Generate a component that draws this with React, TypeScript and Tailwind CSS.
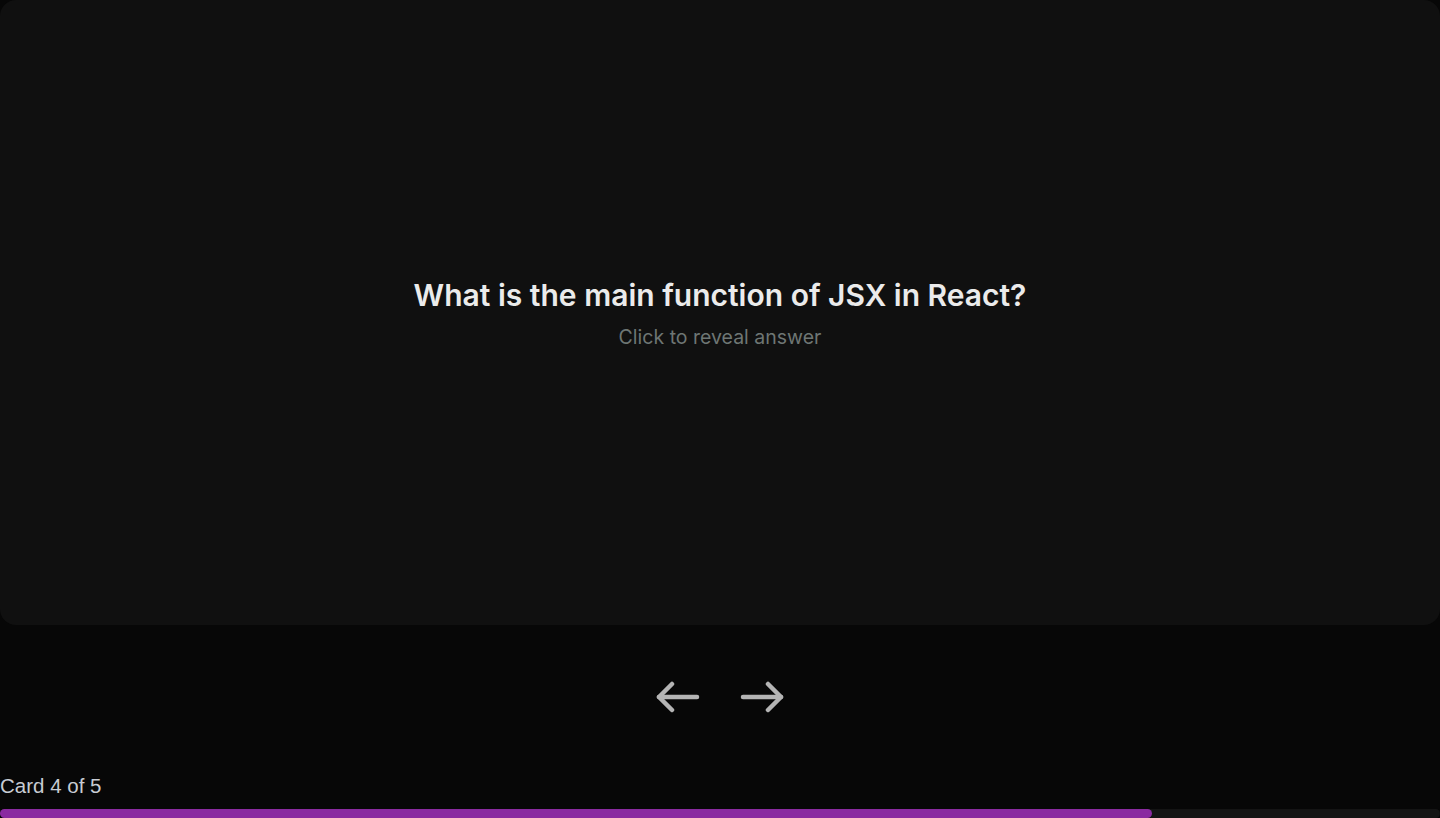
import React from 'react';

const ArrowLeftIcon = () => (
  <svg width="46" height="32" viewBox="0 0 46 32" fill="none" stroke="currentColor" strokeWidth="4.5" strokeLinecap="round" strokeLinejoin="round">
    <path d="M42 16H4" />
    <path d="M17 3 4 16l13 13" />
  </svg>
);

const ArrowRightIcon = () => (
  <svg width="46" height="32" viewBox="0 0 46 32" fill="none" stroke="currentColor" strokeWidth="4.5" strokeLinecap="round" strokeLinejoin="round">
    <path d="M4 16h38" />
    <path d="M29 3l13 13-13 13" />
  </svg>
);

const App = () => {
  const current = 4;
  const total = 5;

  return (
    <div className="min-h-screen bg-[#070707] overflow-hidden" style={{ fontFamily: 'Inter, sans-serif' }}>
      <div className="h-[625px] bg-[#101010] rounded-2xl flex flex-col items-center justify-center cursor-pointer">
        <h1 className="text-[30px] font-semibold text-[#ebebeb] leading-[38px] mt-[1px]">
          What is the main function of JSX in React?
        </h1>
        <p className="text-[19.5px] text-[#6e7674] mt-[9px] leading-7">Click to reveal answer</p>
      </div>

      <div className="flex justify-center items-center gap-[38px] mt-[56px] text-[#b4b4b4]">
        <button className="block">
          <ArrowLeftIcon />
        </button>
        <button className="block">
          <ArrowRightIcon />
        </button>
      </div>

      <div
        className="mt-[59px] text-[20.5px] leading-7 text-[#c8ccd3]"
        style={{ fontFamily: '"Liberation Sans", Arial, sans-serif' }}
      >
        Card {current} of {total}
      </div>

      <div className="mt-[9px] h-[9px] bg-[#141414] rounded-full">
        <div className="h-full bg-[#8a2aa0] rounded-full" style={{ width: `${(current / total) * 100}%` }} />
      </div>
    </div>
  );
};

export default App;
